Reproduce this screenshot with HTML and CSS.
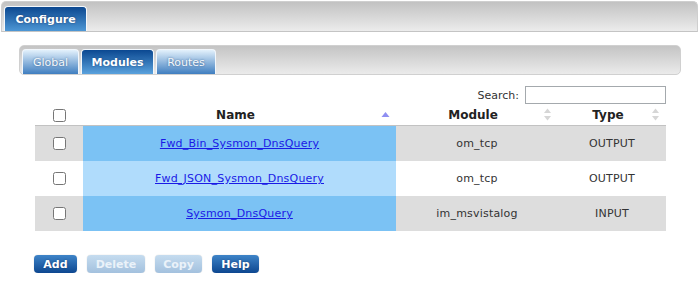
FILE: index.html
```html
<!DOCTYPE html>
<html>
<head>
<meta charset="utf-8">
<link rel="stylesheet" href="styles.css">
</head>
<body>
<div class="topbar">
  <div class="maintab">Configure</div>
</div>
<div class="panel">
  <div class="subbar">
    <div class="tab">Global</div>
    <div class="tab active">Modules</div>
    <div class="tab">Routes</div>
  </div>
  <div class="searchrow">
    <label class="searchlabel">Search:</label>
    <input class="searchinput" type="text">
  </div>
  <table class="grid">
    <colgroup>
      <col class="c-check"><col class="c-name"><col class="c-module"><col class="c-type">
    </colgroup>
    <thead>
      <tr>
        <th class="th-check"><input type="checkbox" class="cb"></th>
        <th class="th-sort">Name
          <svg class="sorticon" width="9" height="12" viewBox="0 0 9 12"><polygon points="0.5,8 4.5,3 8.5,8" fill="#8f8ff2"/></svg>
        </th>
        <th class="th-sort">Module
          <svg class="sorticon" width="9" height="16" viewBox="0 0 9 16"><polygon points="1,6 4.5,1.5 8,6" fill="#d6d6d6"/><polygon points="1,9 4.5,13.5 8,9" fill="#d6d6d6"/></svg>
        </th>
        <th class="th-sort">Type
          <svg class="sorticon" width="9" height="16" viewBox="0 0 9 16"><polygon points="1,6 4.5,1.5 8,6" fill="#d6d6d6"/><polygon points="1,9 4.5,13.5 8,9" fill="#d6d6d6"/></svg>
        </th>
      </tr>
    </thead>
    <tbody>
      <tr class="odd">
        <td><input type="checkbox" class="cb"></td>
        <td class="sorted"><a href="#">Fwd_Bin_Sysmon_DnsQuery</a></td>
        <td>om_tcp</td>
        <td>OUTPUT</td>
      </tr>
      <tr class="even">
        <td><input type="checkbox" class="cb"></td>
        <td class="sorted"><a href="#">Fwd_JSON_Sysmon_DnsQuery</a></td>
        <td>om_tcp</td>
        <td>OUTPUT</td>
      </tr>
      <tr class="odd">
        <td><input type="checkbox" class="cb"></td>
        <td class="sorted"><a href="#">Sysmon_DnsQuery</a></td>
        <td>im_msvistalog</td>
        <td>INPUT</td>
      </tr>
    </tbody>
  </table>
  <div class="buttons">
    <button class="btn btn-add">Add</button>
    <button class="btn btn-delete disabled">Delete</button>
    <button class="btn btn-copy disabled">Copy</button>
    <button class="btn btn-help">Help</button>
  </div>
</div>
</body>
</html>
```
FILE: styles.css
```css
html, body {
  margin: 0;
  padding: 0;
  background: #fff;
  font-family: "DejaVu Sans", Verdana, sans-serif;
  font-size: 11px;
  color: #333;
}

.topbar {
  margin: 1px 2px 0 1px;
  height: 29px;
  border: 1px solid #cfcfcf;
  border-bottom-color: #c4c4c4;
  border-radius: 5px 5px 0 0;
  background: linear-gradient(#c2c2c2, #ececec);
  display: flex;
  align-items: flex-end;
  padding-left: 2px;
  box-sizing: content-box;
}

.maintab {
  width: 81px;
  height: 24px;
  border: 1px solid #f4f8fc;
  border-bottom: none;
  border-radius: 4px 4px 0 0;
  background: linear-gradient(#0c4890, #4d97d5);
  color: #fff;
  font-weight: bold;
  font-size: 11px;
  display: flex;
  align-items: center;
  justify-content: center;
  text-shadow: 0 0 2px rgba(0,0,40,0.5);
}

.panel {
  margin: 13px 0 0 19px;
  width: 662px;
}

.subbar {
  height: 28px;
  border: 1px solid #d0d0d0;
  border-radius: 5px;
  background: linear-gradient(#c4c4c4, #ebebeb);
  display: flex;
  align-items: flex-end;
  gap: 2px;
  padding-left: 2px;
}

.tab {
  height: 24px;
  padding: 0 10px;
  border: 1px solid #f2f7fc;
  border-bottom: none;
  border-radius: 4px 4px 0 0;
  background: linear-gradient(#e3f1fc, #3f7ec0);
  color: #f4f8fc;
  font-size: 11px;
  display: flex;
  align-items: center;
  justify-content: center;
  text-shadow: 0 0 2px rgba(20,60,110,0.7);
}
.tab:first-child { width: 35px; }
.tab:nth-child(3) { width: 38px; }

.tab.active {
  background: linear-gradient(#0b4891, #5aa2dd);
  color: #fff;
  font-weight: bold;
  width: 51px;
}

.searchrow {
  display: flex;
  justify-content: flex-end;
  align-items: center;
  gap: 6px;
  margin-top: 11px;
  width: 647px;
  height: 18px;
}

.searchlabel {
  color: #333;
  font-size: 11px;
}

.searchinput {
  width: 137px;
  height: 14px;
  margin: 0;
  padding: 1px;
  border: 1px solid #a4a9ad;
  border-radius: 0;
  background: #fff;
  outline: none;
}

.grid {
  margin: 0 0 0 16px;
  width: 631px;
  table-layout: fixed;
  border-collapse: collapse;
  border-spacing: 0;
}

.c-check { width: 48px; }
.c-name { width: 313px; }
.c-module { width: 162px; }
.c-type { width: 108px; }

.grid th {
  height: 21px;
  padding: 0 18px 0 10px;
  font-size: 12px;
  font-weight: bold;
  color: #222;
  text-align: center;
  border-bottom: 1px solid #c2c2c2;
  position: relative;
}

.grid th.th-check {
  padding: 0;
}

.sorticon {
  position: absolute;
  right: 6px;
  top: 50%;
  transform: translateY(-50%);
}

.grid td {
  height: 35px;
  padding: 0 10px;
  text-align: center;
  color: #333;
  font-size: 11px;
  letter-spacing: 0.2px;
}

.grid td:first-child {
  padding: 0;
}

.cb {
  width: 13px;
  height: 13px;
  margin: 0;
  vertical-align: middle;
}

tr.odd td { background: #dddddd; }
tr.even td { background: #ffffff; }
tr.odd td.sorted { background: #7bc2f4; }
tr.even td.sorted { background: #b0dcfc; }

.grid a {
  color: #1a1ae6;
  text-decoration: underline;
}

.buttons {
  display: flex;
  gap: 10px;
  margin: 24px 0 0 15px;
}

.btn {
  height: 18px;
  padding: 0;
  border: none;
  border-radius: 4px;
  background: linear-gradient(#3e84c8, #0d4790);
  color: #fff;
  font-family: "DejaVu Sans", Verdana, sans-serif;
  font-size: 11px;
  font-weight: bold;
  box-shadow: 0 0 1px rgba(0,0,0,0.3);
  text-shadow: 0 0 2px rgba(0,0,40,0.4);
  cursor: pointer;
}
.btn-add { width: 43px; }
.btn-delete { width: 58px; }
.btn-copy { width: 47px; }
.btn-help { width: 47px; }

.btn.disabled {
  background: linear-gradient(#c5dcef, #a3c1de);
  color: #eaf2f9;
  text-shadow: none;
}
```
